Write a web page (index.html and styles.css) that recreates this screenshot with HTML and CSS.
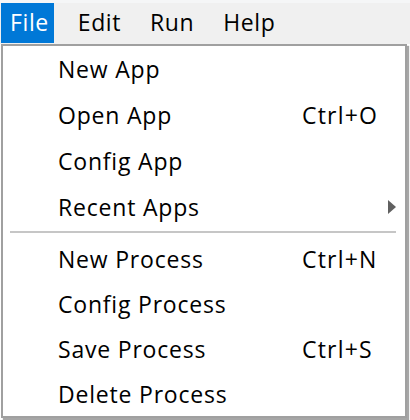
FILE: index.html
```html
<!DOCTYPE html>
<html>
<head>
<meta charset="utf-8">
<link rel="stylesheet" href="styles.css">
</head>
<body>
<div class="menubar">
  <span class="mb-item active">File</span>
  <span class="mb-item">Edit</span>
  <span class="mb-item">Run</span>
  <span class="mb-item">Help</span>
</div>
<div class="dropdown">
  <div class="group first">
    <div class="row"><span class="label">New App</span></div>
    <div class="row"><span class="label">Open App</span><span class="key">Ctrl+O</span></div>
    <div class="row"><span class="label">Config App</span></div>
    <div class="row"><span class="label">Recent Apps</span><span class="arrow"></span></div>
  </div>
  <div class="sep"></div>
  <div class="group second">
    <div class="row"><span class="label">New Process</span><span class="key">Ctrl+N</span></div>
    <div class="row"><span class="label">Config Process</span></div>
    <div class="row"><span class="label">Save Process</span><span class="key">Ctrl+S</span></div>
    <div class="row"><span class="label">Delete Process</span></div>
  </div>
</div>
</body>
</html>
```
FILE: styles.css
```css
html, body {
  margin: 0;
  padding: 0;
}
body {
  width: 410px;
  height: 420px;
  overflow: hidden;
  background: #ffffff;
  font-family: "Open Sans", "Noto Sans", sans-serif;
  font-size: 23px;
  color: #000;
}
.menubar {
  height: 44px;
  box-sizing: border-box;
  background: #f0f0f0;
  border-top: 3px solid #f5f6f7;
  padding-left: 1px;
  display: flex;
  align-items: stretch;
  gap: 15px;
}
.mb-item {
  height: 40px;
  line-height: 39px;
  padding: 0 5px 0 9px;
  letter-spacing: 0.6px;
}
.mb-item.active {
  background: #0078d7;
  color: #fff;
}
.dropdown {
  margin-left: 1px;
  width: 406px;
  box-sizing: border-box;
  border: 2px solid #a0a0a0;
  background: #fff;
  box-shadow: 2px 2px 1px rgba(0, 0, 0, 0.35);
}
.row {
  display: grid;
  grid-template-columns: 244px 1fr;
  align-items: center;
  padding-left: 55px;
  height: 46px;
  letter-spacing: 0.8px;
}
.second .row {
  height: 45px;
}
.key {
  letter-spacing: 1.2px;
}
.arrow {
  justify-self: end;
  margin-right: 9px;
  width: 0;
  height: 0;
  border-left: 8px solid #606060;
  border-top: 7px solid transparent;
  border-bottom: 7px solid transparent;
}
.sep {
  height: 2px;
  background: #c6c6c6;
  margin: 1px 9px 3px 7px;
}
```
